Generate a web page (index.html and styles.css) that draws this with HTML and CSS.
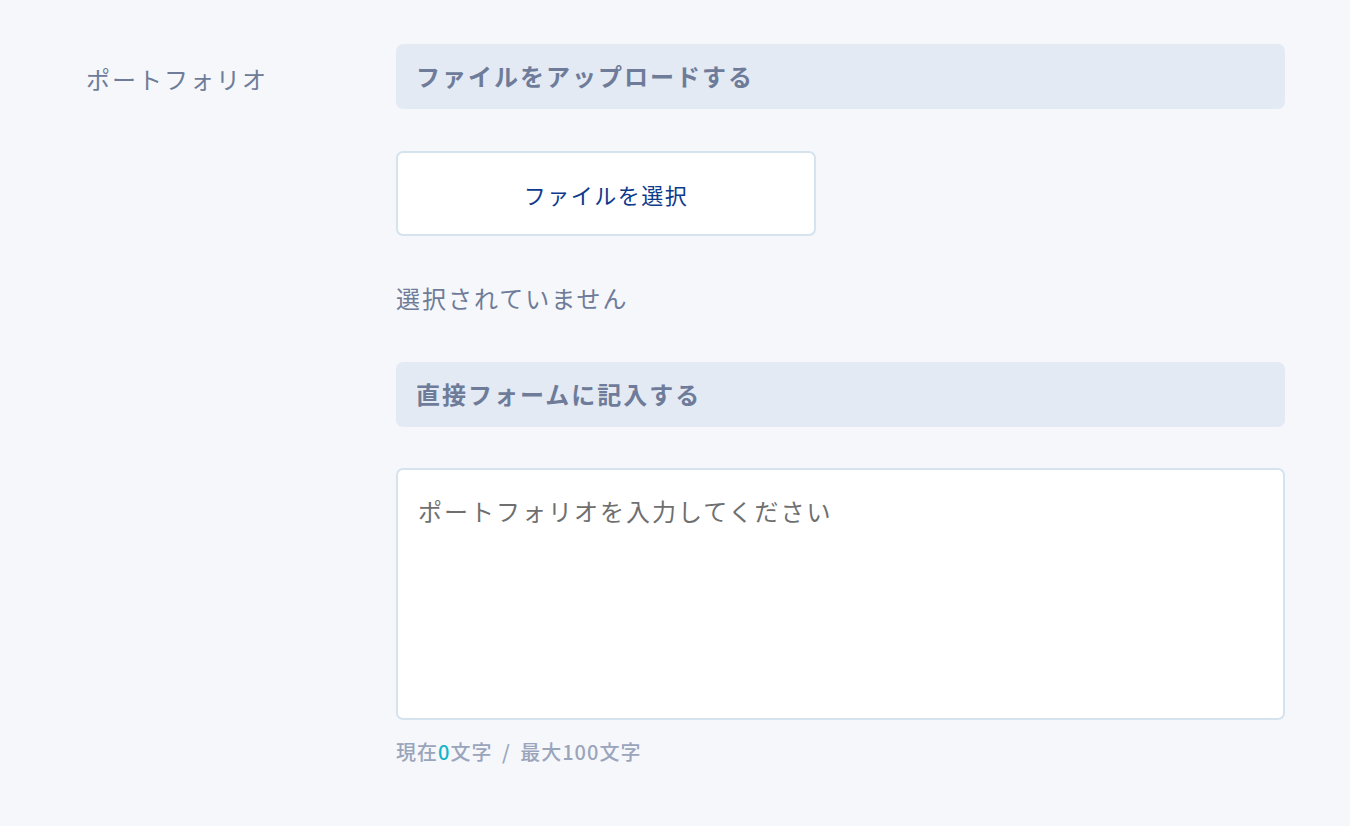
FILE: index.html
```html
<!DOCTYPE html>
<html lang="ja">
<head>
    <meta charset="UTF-8">
    <meta name="viewport" content="width=device-width, initial-scale=1.0">
    <title>ポートフォリオ</title>
    <link rel="stylesheet" href="styles.css">
</head>
<body>
    <div class="form-row">
        <div class="form-label">ポートフォリオ</div>
        <div class="form-body">
            <div class="section-bar">ファイルをアップロードする</div>
            <button class="file-button" type="button">ファイルを選択</button>
            <p class="file-status">選択されていません</p>
            <div class="section-bar">直接フォームに記入する</div>
            <textarea class="portfolio-input" placeholder="ポートフォリオを入力してください"></textarea>
            <p class="char-count">現在<span class="char-now">0</span>文字 / 最大100文字</p>
        </div>
    </div>
</body>
</html>
```

FILE: styles.css
```css
body {
    margin: 0;
    background: #f5f7fb;
    font-family: "Noto Sans CJK JP", "Noto Sans", sans-serif;
    color: #6e7c99;
}
.form-row {
    display: flex;
    padding: 44px 0 0 86px;
}
.form-label {
    width: 310px;
    flex-shrink: 0;
    padding-top: 18px;
    font-size: 24px;
    line-height: 34px;
    letter-spacing: 2px;
    color: #6e7c99;
}
.form-body {
    width: 889px;
    display: flex;
    flex-direction: column;
    align-items: flex-start;
}
.section-bar {
    box-sizing: border-box;
    width: 100%;
    height: 65px;
    padding: 0 20px 2px;
    display: flex;
    align-items: center;
    background: #e4eaf4;
    border-radius: 7px;
    font-size: 24px;
    font-weight: bold;
    letter-spacing: 2px;
    color: #6e7c99;
}
.file-button {
    box-sizing: border-box;
    width: 420px;
    height: 85px;
    margin-top: 42px;
    background: #ffffff;
    border: 2px solid #d5e3ee;
    border-radius: 7px;
    font-family: inherit;
    font-size: 22px;
    letter-spacing: 1.5px;
    color: #0d3a8c;
}
.file-status {
    margin: 45px 0 47px;
    font-size: 24px;
    line-height: 34px;
    letter-spacing: 2px;
    color: #6e7c99;
}
.portfolio-input {
    box-sizing: border-box;
    width: 100%;
    height: 252px;
    margin-top: 41px;
    padding: 24px 20px;
    background: #ffffff;
    border: 2px solid #d5e3ee;
    border-radius: 7px;
    font-family: inherit;
    font-size: 24px;
    line-height: 34px;
    letter-spacing: 2px;
    color: #333;
    resize: none;
}
.portfolio-input::placeholder {
    color: #6f6f6f;
}
.char-count {
    margin: 17px 0 0;
    font-size: 20px;
    font-weight: 500;
    line-height: 30px;
    letter-spacing: 1px;
    word-spacing: 4px;
    color: #9aa5bb;
}
.char-now {
    color: #14b4c8;
}
```
